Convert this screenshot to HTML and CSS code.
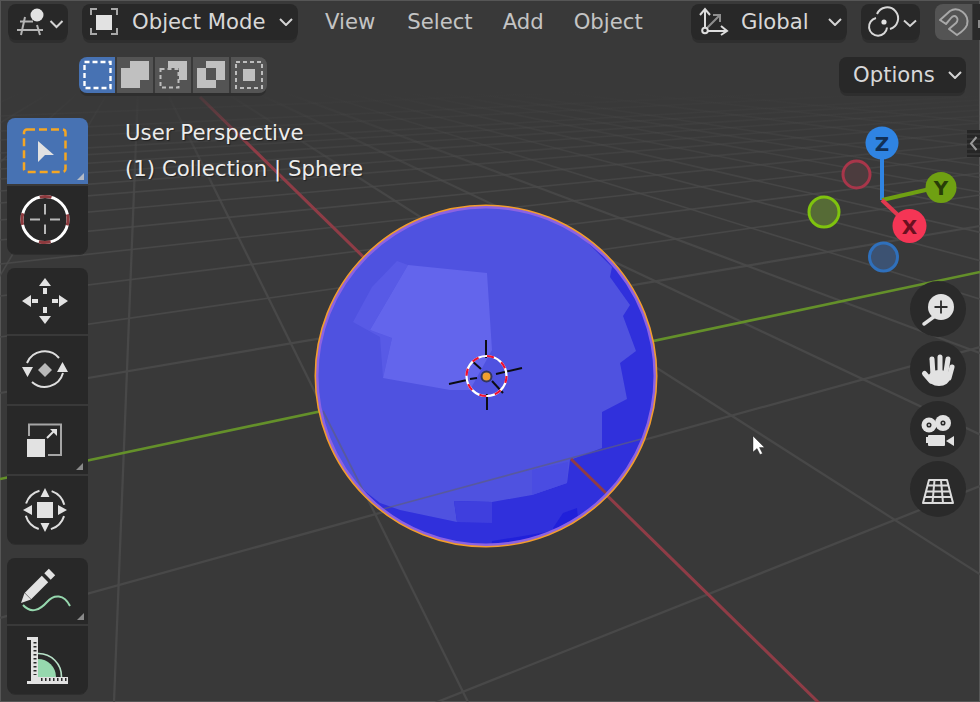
FILE: index.html
```html
<!DOCTYPE html>
<html lang="en">
<head>
<meta charset="utf-8">
<title>Blender 3D Viewport</title>
<link rel="stylesheet" href="styles.css">
</head>
<body>
<div class="window">
  <svg class="scene" viewBox="0 0 980 702" aria-hidden="true">
    <defs>
      <linearGradient id="gridfade" gradientUnits="userSpaceOnUse" x1="0" y1="92" x2="0" y2="300">
        <stop offset="0" stop-color="#4a4a4a" stop-opacity="0"/>
        <stop offset="0.1" stop-color="#4a4a4a" stop-opacity="0.2"/>
        <stop offset="0.5" stop-color="#4a4a4a" stop-opacity="0.8"/>
        <stop offset="1" stop-color="#484848"/>
      </linearGradient>
      <linearGradient id="redfade" gradientUnits="userSpaceOnUse" x1="0" y1="97" x2="0" y2="150">
        <stop offset="0" stop-color="#8f3c46" stop-opacity="0.2"/>
        <stop offset="1" stop-color="#8f3c46"/>
      </linearGradient>
      <clipPath id="ball"><circle cx="486" cy="376" r="170.5"/></clipPath>
    </defs>
    <g class="grid" stroke="url(#gridfade)">
      <line class="near" x1="0" y1="876" x2="980" y2="486"/>
      <line class="near" x1="0" y1="618" x2="980" y2="347"/>
      <line class="near" x1="0" y1="393" x2="980" y2="226"/>
      <line x1="0" y1="337" x2="980" y2="195"/>
      <line x1="0" y1="296" x2="980" y2="173"/>
      <line x1="0" y1="264" x2="980" y2="156"/>
      <line x1="0" y1="240" x2="980" y2="143"/>
      <line x1="0" y1="220" x2="980" y2="132"/>
      <line x1="0" y1="203" x2="980" y2="123"/>
      <line x1="0" y1="191" x2="980" y2="116"/>
      <line x1="0" y1="179" x2="980" y2="110"/>
      <line x1="0" y1="169" x2="980" y2="105"/>
      <line x1="0" y1="160" x2="980" y2="100"/>
      <line x1="0" y1="153" x2="980" y2="96"/>
      <line x1="0" y1="140" x2="980" y2="89"/>
      <line x1="0" y1="131" x2="980" y2="84"/>
      <line x1="0" y1="116" x2="980" y2="76"/>
      <line class="near" x1="140" y1="38" x2="114" y2="702"/>
      <line class="near" x1="140" y1="38" x2="468" y2="702"/>
      <line class="near" x1="140" y1="38" x2="1180" y2="702"/>
      <line class="near" x1="140" y1="38" x2="1547" y2="702"/>
      <line class="near" x1="140" y1="38" x2="1910" y2="702"/>
      <line x1="140" y1="38" x2="2276" y2="702"/>
      <line x1="140" y1="38" x2="2645" y2="702"/>
      <line x1="140" y1="38" x2="3009" y2="702"/>
      <line x1="140" y1="38" x2="3391" y2="702"/>
      <line x1="140" y1="38" x2="3762" y2="702"/>
      <line x1="140" y1="38" x2="4139" y2="702"/>
      <line x1="140" y1="38" x2="4514" y2="702"/>
      <line x1="140" y1="38" x2="5277" y2="702"/>
      <line x1="140" y1="38" x2="6041" y2="702"/>
      <line x1="140" y1="38" x2="6800" y2="702"/>
      <line x1="140" y1="38" x2="-251" y2="702"/>
      <line x1="140" y1="38" x2="-607" y2="702"/>
      <line x1="140" y1="38" x2="-953" y2="702"/>
      <line x1="140" y1="38" x2="-1305" y2="702"/>
      <line x1="140" y1="38" x2="-1656" y2="702"/>
    </g>
    <line class="axis-g" x1="0" y1="479" x2="980" y2="272"/>
    <line class="axis-r" stroke="url(#redfade)" x1="200" y1="97" x2="820" y2="704"/>

    <circle class="ball-base" cx="486" cy="376" r="170.5"/>
    <g clip-path="url(#ball)">
      <polygon class="ball-mid" points="397,261 408,265 370,330 392,338 383,378 380,337 353,322 372,287"/>
      <polygon class="ball-light" points="408,265 487,273 492,350 470,390 450,390 383,378 392,338 370,330"/>
      <polygon class="ball-dark" points="585,240 612,267 610,277 630,305 623,316 636,351 620,363 627,399 602,412 602,448 570,460 567,483 532,495 492,502 454,501 457,522 400,510 380,503 357,485 360,580 620,580 720,450 720,240"/>
      <polygon class="ball-half" points="454,501 492,502 492,523 457,522"/>
      <polygon class="ball-soft" points="532,470 568,462 567,483 532,495"/>
      <polygon class="ball-deep" points="553,528 563,513 577,508 578,518 556,535"/>
      <polygon class="ball-deep" points="492,541 553,531 556,560 490,560"/>
      <line class="thru" x1="383" y1="509" x2="645" y2="438"/>
      <line class="thru" x1="323" y1="411" x2="373" y2="510"/>
      <line class="thru-r" x1="571" y1="459" x2="610" y2="497"/>
    </g>
    <circle class="ball-rim" cx="486" cy="376" r="169"/>
    <circle class="ball-edge" cx="486" cy="376" r="170.7"/>

    <g class="cross">
      <line x1="486" y1="340" x2="486" y2="358"/>
      <line x1="487" y1="394" x2="487" y2="410"/>
      <line x1="449" y1="384" x2="467" y2="380"/>
      <line x1="470" y1="379" x2="477" y2="378"/>
      <line x1="496" y1="374" x2="522" y2="368"/>
      <line x1="472" y1="361" x2="481" y2="369"/>
      <line x1="492" y1="381" x2="503" y2="393"/>
    </g>
    <circle class="ring-w" cx="486.5" cy="376" r="20"/>
    <circle class="ring-r" cx="486.5" cy="376" r="20"/>
    <circle class="origin" cx="486.5" cy="376.5" r="5"/>

    <path class="pointer" d="M753 436V452L757 448.500L760 454.500L762.500 453.500L759.500 447.500H764.500Z"/>

    <g class="gizmo">
      <line class="gz-b" x1="882" y1="200" x2="882" y2="156"/>
      <line class="gz-g" x1="882" y1="200" x2="930" y2="189"/>
      <line class="gz-r" x1="882" y1="200" x2="900" y2="217"/>
      <circle class="neg-r" cx="856.500" cy="174.500" r="13.500"/>
      <circle class="neg-g" cx="824" cy="212" r="15"/>
      <circle class="neg-b" cx="883.500" cy="257" r="14"/>
      <circle class="pos-b" cx="882" cy="143" r="16.500"/>
      <circle class="pos-g" cx="941" cy="187.500" r="15.500"/>
      <circle class="pos-r" cx="909.500" cy="226" r="17"/>
      <text class="gz-text t-b" x="882" y="150.500">Z</text>
      <text class="gz-text t-g" x="941" y="195">Y</text>
      <text class="gz-text t-r" x="909.500" y="233.500">X</text>
    </g>
  </svg>

  <div class="topbar">
    <div class="btn btn-view">
      <svg class="ico" width="60" height="36" viewBox="8 4 60 36" aria-hidden="true">
        <circle class="f-white" cx="37" cy="15" r="6.500"/>
        <g class="s-soft">
          <line x1="20" y1="21.500" x2="33" y2="21.500"/>
          <line x1="17" y1="30" x2="43" y2="30"/>
          <line x1="25" y1="17" x2="21" y2="35"/>
          <line x1="37" y1="25" x2="40" y2="35"/>
        </g>
        <path class="chev" d="M50.500 21L56.500 27L62.500 21"/>
      </svg>
    </div>
    <div class="btn btn-mode">
      <svg class="ico" width="50" height="36" viewBox="82 4 50 36" aria-hidden="true">
        <path class="s-bracket" d="M91 15V9H97M111 9H117V15M117 28V34H111M97 34H91V28"/>
        <rect class="f-white" x="96" y="15" width="16" height="15"/>
      </svg>
      <span class="label">Object Mode</span>
      <svg class="chev-ico" width="14" height="8" viewBox="0 0 14 8" aria-hidden="true"><path class="chev" d="M1 1L7 7L13 1"/></svg>
    </div>
    <nav class="menu">
      <span>View</span><span>Select</span><span>Add</span><span>Object</span>
    </nav>
    <div class="btn btn-orient">
      <svg class="ico" width="50" height="36" viewBox="691 4 50 36" aria-hidden="true">
        <g class="s-axes">
          <path d="M705 27V10M700 15L705 9L710 15"/>
          <path d="M708 31H726M721 26L727 31L721 35"/>
        </g>
        <path class="s-axes-d" d="M707 28L719 16M713 15H720V22"/>
        <circle class="s-axes f-none" cx="705" cy="30.500" r="2.800"/>
      </svg>
      <span class="label">Global</span>
      <svg class="chev-ico" width="14" height="8" viewBox="0 0 14 8" aria-hidden="true"><path class="chev" d="M1 1L7 7L13 1"/></svg>
    </div>
    <div class="btn btn-link">
      <svg class="ico" width="59" height="36" viewBox="861 4 59 36" aria-hidden="true">
        <path class="s-link" d="M877 14A11 11 0 1 1 890 29"/>
        <path class="s-link" d="M887 27.500A9 9 0 1 1 876 18"/>
        <circle class="f-white" cx="884" cy="22" r="2.600"/>
        <path class="chev" d="M904 20.500L910 26L916 20.500"/>
      </svg>
    </div>
    <div class="btn-snap">
      <svg class="ico" width="37" height="36" viewBox="935 4 37 36" aria-hidden="true">
        <path class="s-magnet" d="M940 20L950 11C958 6 970 14 967 25C965 30 960 33 957 35L949 29L956 23C960 19 955 13 951 18L946 24Z"/>
      </svg>
    </div>
    <div class="btn-snap-next"><i></i></div>
  </div>

  <div class="subbar">
    <div class="seg-group">
      <div class="seg seg-on">
        <svg class="ico" width="36" height="36" viewBox="79 57 36 36" aria-hidden="true"><rect class="s-dash-w" x="84.500" y="62" width="26" height="26"/></svg>
      </div>
      <div class="seg">
        <svg class="ico" width="36" height="36" viewBox="117 57 36 36" aria-hidden="true"><rect class="f-seg" x="121" y="68" width="19" height="20"/><rect class="f-seg" x="130" y="61" width="19" height="19"/></svg>
      </div>
      <div class="seg">
        <svg class="ico" width="36" height="36" viewBox="155 57 36 36" aria-hidden="true"><rect class="s-dash-g" x="160.500" y="69" width="18" height="18.500"/><path class="f-seg" d="M168 61H187V80H179V68H168Z"/></svg>
      </div>
      <div class="seg">
        <svg class="ico" width="36" height="36" viewBox="193 57 36 36" aria-hidden="true"><path class="f-seg" d="M206 61H225V80H216V88H197V68H206ZM206 68V80H216V68Z" fill-rule="evenodd"/></svg>
      </div>
      <div class="seg">
        <svg class="ico" width="36" height="36" viewBox="231 57 36 36" aria-hidden="true"><rect class="s-dash-g" x="236" y="62" width="26" height="26"/><rect class="f-seg" x="243" y="69" width="12" height="12"/></svg>
      </div>
    </div>
    <div class="btn btn-options">
      <span class="label">Options</span>
      <svg class="chev-ico" width="14" height="8" viewBox="0 0 14 8" aria-hidden="true"><path class="chev" d="M1 1L7 7L13 1"/></svg>
    </div>
  </div>

  <div class="main">
    <aside class="toolbar">
      <div class="tool-group">
        <div class="tool tool-s tool-on">
          <svg class="ico" width="81" height="66" viewBox="7 118 81 66" aria-hidden="true">
            <rect class="s-dash-o" x="24" y="129.500" width="41.500" height="42.500" rx="3"/>
            <path class="f-white" d="M38 141L54 155H45L38 162Z"/>
            <path class="f-corner-on" d="M77 180H84V173Z"/>
          </svg>
        </div>
        <div class="tool tool-l">
          <svg class="ico" width="81" height="68" viewBox="7 186 81 68" aria-hidden="true">
            <circle class="ring3-w" cx="45" cy="219.500" r="23"/>
            <circle class="ring3-r" cx="45" cy="219.500" r="23"/>
            <path class="s-cross" d="M30 219.500H40M50 219.500H60M45 204V214.500M45 224.500V234"/>
          </svg>
        </div>
      </div>
      <div class="tool-group">
        <div class="tool tool-s">
          <svg class="ico" width="81" height="66" viewBox="7 268 81 66" aria-hidden="true">
            <path class="f-white" d="M45 278L51 286H39ZM43 288H47V294H43ZM45 324L51 316H39ZM43 307H47V313H43ZM22 301L31 295V307ZM32 299H38V303H32ZM68 301L59 295V307ZM52 299H58V303H52Z"/>
          </svg>
        </div>
        <div class="tool tool-l">
          <svg class="ico" width="81" height="68" viewBox="7 336 81 68" aria-hidden="true">
            <path class="f-grey" d="M38 370L45 363L52 370L45 377Z"/>
            <path class="s-arc" d="M27 363A19 19 0 0 1 59 358M32 382A19 19 0 0 0 63 373"/>
            <path class="f-white" d="M22 367H33L27.500 377ZM57 372H68L62.500 362Z"/>
          </svg>
        </div>
        <div class="tool tool-l">
          <svg class="ico" width="81" height="68" viewBox="7 406 81 68" aria-hidden="true">
            <path class="s-scale" d="M29 436V424.500H61V455H48"/>
            <rect class="f-white" x="27" y="439" width="18" height="18"/>
            <path class="s-white" d="M47 438L54 431"/>
            <path class="f-white" d="M50 429H57V436Z"/>
            <path class="f-corner" d="M76 470H83V463Z"/>
          </svg>
        </div>
        <div class="tool tool-l">
          <svg class="ico" width="81" height="68" viewBox="7 476 81 68" aria-hidden="true">
            <circle class="s-tf" cx="45" cy="510" r="20"/>
            <rect class="f-white" x="37" y="502" width="16" height="16"/>
            <path class="f-white" d="M45 488L49.500 497H40.500ZM45 532L49.500 523H40.500ZM23 510L32 505V515ZM67 510L58 505V515Z"/>
          </svg>
        </div>
      </div>
      <div class="tool-group">
        <div class="tool tool-s">
          <svg class="ico" width="81" height="66" viewBox="7 558 81 66" aria-hidden="true">
            <path class="s-pencil" d="M28 596L45 579"/>
            <path class="s-pencil" d="M47.500 576.500L52 572"/>
            <path class="f-white" d="M21 603L24.500 593L31 599.500Z"/>
            <path class="s-curve" d="M23 605C31 614 40 610 47 602C54 594 64 594 70 606"/>
            <path class="f-corner" d="M77 620H84V613Z"/>
          </svg>
        </div>
        <div class="tool tool-l">
          <svg class="ico" width="81" height="68" viewBox="7 626 81 68" aria-hidden="true">
            <path class="f-mint" d="M38 659A18 18 0 0 1 56 677H38Z"/>
            <path class="s-mint" d="M38 653.500A23 23 0 0 1 61.500 677"/>
            <path class="f-white" d="M27 637H38V640V677H68V684H27V681H31V640H27Z"/>
            <path class="s-tick" d="M35 642V675"/>
            <path class="s-tick" d="M41 679.500H67"/>
          </svg>
        </div>
      </div>
    </aside>
    <div class="info">
      <div>User Perspective</div>
      <div>(1) Collection | Sphere</div>
    </div>
    <div class="nav">
      <div class="nav-btn">
        <svg class="ico" width="56" height="56" viewBox="910 281 56 56" aria-hidden="true">
          <circle class="f-white" cx="941" cy="307" r="13"/>
          <path class="s-white-4" d="M935 316L924 324"/>
          <path class="s-plus" d="M934.500 307H947.500M941 300.500V313.500"/>
        </svg>
      </div>
      <div class="nav-btn">
        <svg class="ico" width="56" height="56" viewBox="910 341 56 56" aria-hidden="true">
          <g class="s-finger">
            <path d="M933 375L932 359"/>
            <path d="M940 375V357"/>
            <path d="M945.500 375L948 359"/>
            <path d="M949 378L952 367"/>
            <path d="M931 381L924.500 373.500"/>
          </g>
          <ellipse class="f-white" cx="939" cy="378" rx="11" ry="8"/>
        </svg>
      </div>
      <div class="nav-btn">
        <svg class="ico" width="56" height="56" viewBox="910 401 56 56" aria-hidden="true">
          <circle class="f-white" cx="929" cy="425" r="7.500"/>
          <circle class="f-white" cx="943" cy="423" r="8"/>
          <circle class="hole" cx="929" cy="425" r="1.800"/>
          <circle class="hole" cx="943" cy="423" r="1.800"/>
          <rect class="f-white" x="928" y="435" width="17" height="11" rx="1"/>
          <rect class="f-white" x="926" y="437" width="2" height="6"/>
          <path class="f-white" d="M954 436V446L946 441Z"/>
        </svg>
      </div>
      <div class="nav-btn">
        <svg class="ico" width="56" height="56" viewBox="910 461 56 56" aria-hidden="true">
          <path class="s-persp" d="M929 480H947L953 503H923ZM926 491.500H950M924.500 497H951.500M927.500 485.500H948.500M934.500 480L932.500 503M941 480L943 503"/>
        </svg>
      </div>
    </div>
  </div>

  <div class="edge-tab">
    <svg class="ico" width="13" height="27" viewBox="967 130 13 27" aria-hidden="true"><path class="s-edge" d="M976.500 137L971 143.500L976.500 150"/></svg>
  </div>
</div>
</body>
</html>
```
FILE: styles.css
```css
* { box-sizing: border-box; }
html, body { margin: 0; padding: 0; background: #393939; }
body { width: 980px; height: 702px; overflow: hidden; }

.window {
  position: relative;
  width: 980px;
  height: 702px;
  overflow: hidden;
  background: #393939;
  color: #d8d8d8;
  font-family: "DejaVu Sans", sans-serif;
  font-size: 21.2px;
  outline: 1px solid #565656;
  outline-offset: -1px;
}
.scene { position: absolute; left: 0; top: 0; width: 980px; height: 702px; }
.ico { display: block; flex: none; }

/* scene */
.grid line { stroke-width: 1.6; }
.grid line.near { stroke-width: 2.2; }
.axis-g { stroke: #64902a; stroke-width: 2.6; }
.axis-r { stroke-width: 3; }
.ball-base { fill: #4f52e0; }
.ball-mid { fill: #585ae6; }
.ball-light { fill: #6365ec; }
.ball-dark { fill: #3030dc; }
.ball-half { fill: #3f3fde; }
.ball-soft { fill: #4a4ce2; }
.ball-deep { fill: #2020da; }
.thru { stroke: #5c5c80; stroke-width: 1.7; stroke-opacity: .7; }
.thru-r { stroke: #8f3c46; stroke-width: 3; }
.ball-rim { fill: none; stroke: #8c62e2; stroke-width: 3; }
.ball-edge { fill: none; stroke: #f29c2e; stroke-width: 1.6; }
.cross line { stroke: #0c0c14; stroke-width: 2; }
.ring-w { fill: none; stroke: #fff; stroke-width: 2.2; }
.ring-r { fill: none; stroke: #f01030; stroke-width: 2.2; stroke-dasharray: 7 8.7; }
.origin { fill: #f0a030; stroke: #34365e; stroke-width: 2; }
.pointer { fill: #fff; stroke: #222; stroke-width: .4; }

.gz-b { stroke: #2f84e3; stroke-width: 4; }
.gz-g { stroke: #6fa012; stroke-width: 4; }
.gz-r { stroke: #e2394f; stroke-width: 4; }
.pos-b { fill: #2f84e3; }
.pos-g { fill: #6fa012; }
.pos-r { fill: #f53555; }
.neg-r { fill: #4c3c3e; stroke: #a8364a; stroke-width: 3; }
.neg-g { fill: #566b36; stroke: #7fc30e; stroke-width: 3; }
.neg-b { fill: #3c5272; stroke: #2f70bc; stroke-width: 3; }
.gz-text { font-family: "DejaVu Sans", sans-serif; font-weight: 700; font-size: 20px; text-anchor: middle; }
.t-b { fill: #123056; }
.t-g { fill: #283c08; }
.t-r { fill: #6a1020; }

/* bars */
.topbar { position: relative; display: flex; align-items: flex-start; padding: 4px 0 0 8px; height: 40px; }
.btn {
  display: flex;
  align-items: center;
  height: 36px;
  background: #282828;
  border-radius: 8px;
  box-shadow: 0 4px 0 -1px #2e2e2e;
}
.label { white-space: nowrap; padding-bottom: 2px; }
.chev-ico { flex: none; margin-left: auto; }
.chev { fill: none; stroke: #d4d4d4; stroke-width: 2; }
.btn-view { width: 60px; }
.btn-mode { width: 216px; margin-left: 14px; padding-right: 5px; }
.menu { display: flex; height: 36px; align-items: center; margin-left: 27px; color: #c4c4c4; }
.menu span { padding-bottom: 2px; }
.menu span:nth-child(1) { margin-right: 32px; }
.menu span:nth-child(2) { margin-right: 30px; }
.menu span:nth-child(3) { margin-right: 30px; }
.btn-orient { width: 156px; margin-left: auto; padding-right: 5px; }
.btn-link { width: 59px; margin-left: 14px; }
.btn-snap { width: 37px; height: 36px; margin-left: 15px; background: #545454; border-radius: 8px 0 0 8px; }
.btn-snap-next { position: relative; width: 7px; height: 36px; margin-left: 1px; background: #2a2a2a; }
.btn-snap-next i { position: absolute; left: 5px; top: 16px; width: 2px; height: 8px; background: #8a8a8a; }

.subbar { position: relative; display: flex; align-items: flex-start; margin-top: 17px; padding: 0 14px 0 79px; height: 36px; }
.seg-group { display: flex; gap: 2px; background: #393939; box-shadow: 0 4px 0 -1px #2e2e2e; border-radius: 8px; }
.seg { width: 36px; height: 36px; background: #545454; }
.seg:first-child { border-radius: 8px 0 0 8px; }
.seg:last-child { border-radius: 0 8px 8px 0; }
.seg-on { background: #4772b3; }
.btn-options { width: 127px; margin-left: auto; padding: 0 4px 0 14px; }

.main { position: relative; display: flex; align-items: flex-start; margin-top: 25px; padding: 0 14px 0 7px; }
.toolbar { display: flex; flex-direction: column; gap: 14px; width: 81px; flex: none; }
.tool-group { display: flex; flex-direction: column; gap: 2px; background: #393939; box-shadow: 0 3px 0 -2px #2e2e2e; border-radius: 8px; }
.tool { background: #282828; }
.tool-s { height: 66px; }
.tool-l { height: 68px; }
.tool:first-child { border-radius: 8px 8px 0 0; }
.tool:last-child { border-radius: 0 0 8px 8px; }
.tool-on { background: #4772b3; }
.info { margin: -3px 0 0 37px; color: #ececec; font-size: 21.3px; line-height: 36px; white-space: nowrap; text-shadow: 1px 1px 1px rgba(0,0,0,.45); }
.nav { display: flex; flex-direction: column; gap: 4px; margin: 163px 0 0 auto; }
.nav-btn { width: 56px; height: 56px; border-radius: 50%; background: #2a2a2a; }

.edge-tab {
  position: absolute;
  left: 967px;
  top: 130px;
  width: 13px;
  height: 27px;
  background: repeating-linear-gradient(#262626 0 3px, #333 3px 5px);
}

/* icon paints */
.f-none { fill: none; }
.f-white { fill: #e2e2e2; }
.f-grey { fill: #b8b8b8; }
.f-seg { fill: #c0c0c0; }
.f-corner { fill: #8a8a8a; }
.f-corner-on { fill: #b4bac6; }
.f-mint { fill: #96d8ae; }
.hole { fill: #d0d0d0; stroke: #2a2a2a; stroke-width: 1.5; }
.s-soft { stroke: #b4b4b4; stroke-width: 2; fill: none; }
.s-bracket { fill: none; stroke: #a8a8a8; stroke-width: 2; }
.s-axes { fill: none; stroke: #dcdcdc; stroke-width: 2; }
.s-axes-d { fill: none; stroke: #8e8e8e; stroke-width: 2; }
.s-link { fill: none; stroke: #d8d8d8; stroke-width: 2; }
.s-magnet { fill: none; stroke: #a8a8a8; stroke-width: 2; stroke-linejoin: round; }
.s-dash-w { fill: none; stroke: #fff; stroke-width: 2.4; stroke-dasharray: 5 3; }
.s-dash-g { fill: none; stroke: #bdbdbd; stroke-width: 2; stroke-dasharray: 4 3; }
.s-dash-o { fill: none; stroke: #f5a623; stroke-width: 2.5; stroke-dasharray: 8 4; }
.ring3-w { fill: none; stroke: #fff; stroke-width: 3; }
.ring3-r { fill: none; stroke: #8e3a3e; stroke-width: 3; stroke-dasharray: 12 24.100; stroke-dashoffset: 6; }
.s-cross { fill: none; stroke: #b8b8b8; stroke-width: 2; }
.s-arc { fill: none; stroke: #dedede; stroke-width: 2; }
.s-scale { fill: none; stroke: #a6a6a6; stroke-width: 2; }
.s-white { fill: none; stroke: #e2e2e2; stroke-width: 2; }
.s-tf { fill: none; stroke: #dedede; stroke-width: 2; stroke-dasharray: 19 12.400; stroke-dashoffset: -6.200; }
.s-pencil { fill: none; stroke: #e2e2e2; stroke-width: 9; }
.s-curve { fill: none; stroke: #96d8ae; stroke-width: 2; }
.s-mint { fill: none; stroke: #b8e2c8; stroke-width: 1.6; }
.s-tick { fill: none; stroke: #282828; stroke-width: 3; stroke-dasharray: 1.500 2.500; }
.s-white-4 { fill: none; stroke: #e2e2e2; stroke-width: 3.5; stroke-linecap: round; }
.s-plus { fill: none; stroke: #2c2c2c; stroke-width: 1.8; }
.s-finger path { fill: none; stroke: #e2e2e2; stroke-width: 5; stroke-linecap: round; }
.s-persp { fill: none; stroke: #dcdcdc; stroke-width: 2; stroke-linejoin: round; }
.s-edge { fill: none; stroke: #9a9a9a; stroke-width: 2; }
```
